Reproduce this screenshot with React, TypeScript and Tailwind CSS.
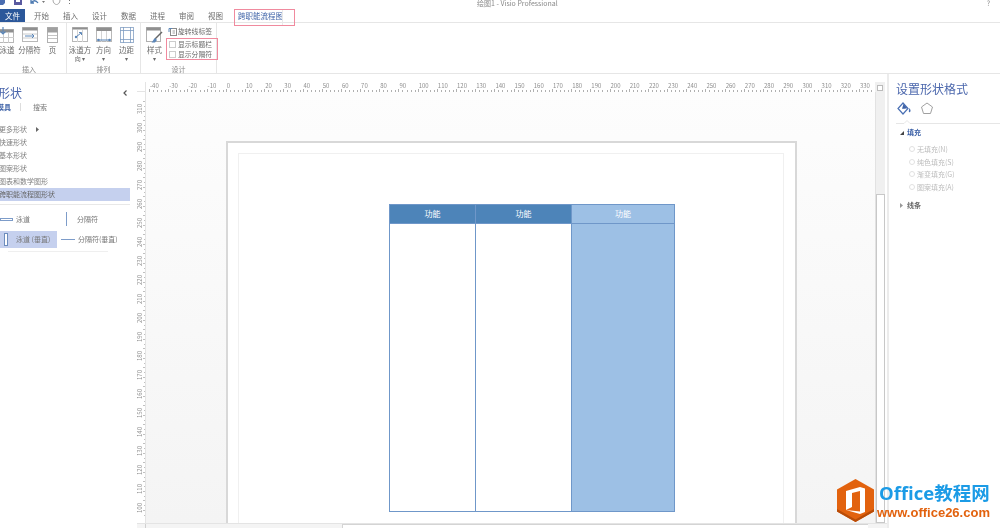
import React from "react";

const cjk = { fontFamily: '"Noto Sans CJK SC","Noto Sans",sans-serif' };

const B = "#5b86b8";

function LaneIcon() {
  return (
    <svg width="16" height="16" viewBox="0 0 16 16" className="-ml-[2px]">
      <rect x="0.5" y="2.500" width="15" height="13" fill="#fff" stroke="#b8b8b8" />
      <rect x="0.5" y="2.500" width="15" height="3" fill="#8f8f8f" />
      <path d="M5.500 6V16M10.500 6V16M0 10.500H16" stroke="#cccccc" />
      <path d="M5 0V7M2.500 4.500L5 7l2.500-2.500" stroke={B} fill="none" strokeWidth="1.200" />
    </svg>
  );
}
function SepIcon() {
  return (
    <svg width="16" height="15" viewBox="0 0 16 15">
      <rect x="0.5" y="0.5" width="15" height="14" fill="#fff" stroke="#b8b8b8" />
      <rect x="0.5" y="0.5" width="15" height="3" fill="#8f8f8f" />
      <path d="M1 7H15M1 11H15" stroke="#cccccc" />
      <path d="M3 9H12M10 7l2 2-2 2" stroke={B} fill="none" />
    </svg>
  );
}
function PageIcon() {
  return (
    <svg width="11" height="16" viewBox="0 0 11 16">
      <rect x="0.5" y="0.5" width="10" height="15" fill="#fff" stroke="#b0b0b0" />
      <rect x="0.5" y="0.5" width="10" height="5" fill="#a0a0a0" />
      <path d="M1 8.500H10M1 11.500H10" stroke="#c4c4c4" />
    </svg>
  );
}
function DirIcon() {
  return (
    <svg width="16" height="15" viewBox="0 0 16 15">
      <rect x="0.5" y="0.5" width="15" height="14" fill="#fff" stroke="#b8b8b8" />
      <rect x="0.5" y="0.5" width="15" height="2" fill="#8f8f8f" />
      <path d="M5.500 3V15M10.500 3V15" stroke="#d4d4d4" />
      <path d="M4 10L9 6M7 5.500h2.500v2.500" stroke={B} fill="none" />
      <circle cx="4" cy="10" r="1.200" fill={B} />
    </svg>
  );
}
function ToIcon() {
  return (
    <svg width="16" height="15" viewBox="0 0 16 15">
      <rect x="0.5" y="0.5" width="15" height="14" fill="#fff" stroke="#b8b8b8" />
      <rect x="0.5" y="0.5" width="15" height="3.500" fill="#8f8f8f" />
      <path d="M5.500 4V15M10.500 4V15" stroke="#d4d4d4" />
      <path d="M1 13H15" stroke={B} />
      <circle cx="2.500" cy="13" r="1.200" fill={B} />
      <circle cx="13.500" cy="13" r="1.200" fill={B} />
    </svg>
  );
}
function MarginIcon() {
  return (
    <svg width="14" height="16" viewBox="0 0 14 16">
      <rect x="0.5" y="0.5" width="13" height="15" fill="#fff" stroke="#9db3cf" />
      <path d="M3.500 0V16M10.500 0V16M0 3.500H14M0 12.500H14" stroke="#7e9cc2" strokeWidth="0.8" />
    </svg>
  );
}
function StyleIcon() {
  return (
    <svg width="17" height="16" viewBox="0 0 17 16">
      <rect x="0.5" y="0.5" width="14" height="14" fill="#fff" stroke="#b0b0b0" />
      <rect x="0.5" y="0.5" width="14" height="3" fill="#8f8f8f" />
      <path d="M16 5L9 12" stroke="#666" strokeWidth="1.500" />
      <path d="M9 11l2 2-2 2.500H5.500c1.500-1 1.500-3 3.500-4.500z" fill={B} />
    </svg>
  );
}
function RotateIcon() {
  return (
    <svg width="9" height="9" viewBox="0 0 9 9">
      <rect x="2.500" y="1.500" width="6" height="7" fill="#fff" stroke="#8a8a8a" />
      <path d="M1 5V1.500H4" stroke={B} fill="none" />
      <path d="M4.500 4H7M4.500 6H7" stroke="#a0a0a0" />
    </svg>
  );
}

function RibbonBtn({ icon, label, sub, w }: { icon: React.ReactNode; label: string; sub?: string; w: string }) {
  return (
    <div className={`flex flex-col items-center ${w}`}>
      <div className="h-[18px] flex items-start">{icon}</div>
      <div className="text-[7.500px] leading-[9px] text-[#6a6a6a] whitespace-nowrap">{label}</div>
      {sub && <div className="text-[6px] leading-[9px] text-[#6a6a6a] whitespace-nowrap">{sub}</div>}
    </div>
  );
}

function Group({ label, w, children, pl, labelCls = "" }: { label: string; w: string; pl: string; labelCls?: string; children: React.ReactNode }) {
  return (
    <div className={`${w} h-full border-r border-[#e6e6e6] flex flex-col shrink-0`}>
      <div className={`h-[41px] flex pt-[4px] ${pl}`}>{children}</div>
      <div className={`h-[9px] text-center text-[7px] leading-[11px] text-[#888] ${labelCls}`}>{label}</div>
    </div>
  );
}

function HRuler() {
  const items: number[] = [];
  for (let v = -40; v <= 330; v += 10) items.push(v);
  return (
    <div className="flex-1 h-full overflow-hidden flex pl-[3px]">
      {items.map((v) => (
        <div key={v} className="w-[19.2px] shrink-0 h-full flex flex-col">
          <div className="text-[6px] leading-[7px] h-[7px] pl-[1px] text-[#8f8f8f] whitespace-nowrap">{v}</div>
          <div className="flex-1 flex items-end justify-between pr-[2px] border-b border-[#e0e0e0]">
            {[3, 2, 2, 2, 2].map((h, i) => (
              <span key={i} className="w-px bg-[#b0b0b0]" style={{ height: h }} />
            ))}
          </div>
        </div>
      ))}
    </div>
  );
}

function VRuler() {
  const items: number[] = [];
  for (let v = 310; v >= 100; v -= 10) items.push(v);
  return (
    <div className="w-[9px] h-full overflow-hidden flex flex-col pt-[7px] border-r border-[#e4e4e4] shrink-0">
      {items.map((v) => (
        <div key={v} className="h-[19px] shrink-0 flex items-center">
          <span className="text-[6px] leading-[6px] text-[#8f8f8f] [writing-mode:vertical-rl] rotate-180">{v}</span>
          <span className="flex-1 flex flex-col justify-between h-[16px] items-end">
            {[2, 1.500, 2, 1.500].map((w, i) => (
              <span key={i} className="h-px bg-[#c0c0c0]" style={{ width: w }} />
            ))}
          </span>
        </div>
      ))}
    </div>
  );
}

function Lane({ w, filled, last }: { w: string; filled?: boolean; last?: boolean }) {
  return (
    <div className={`${w} flex flex-col ${last ? "" : "border-r"} border-[#6f97c9]`}>
      <div
        className={`h-[19px] flex items-center justify-center text-[8px] text-white border-b border-[#6f97c9] ${
          filled ? "bg-[#9dc0e5]" : "bg-[#4d84b9]"
        }`}
      >
        功能
      </div>
      <div className={`flex-1 ${filled ? "bg-[#9dc0e5]" : "bg-white"}`} />
    </div>
  );
}

function Radio({ label }: { label: string }) {
  return (
    <div className="flex items-center h-[12.500px] pl-[13px] gap-[2px]">
      <span className="w-[6px] h-[6px] rounded-full border border-[#e0e0e0]" />
      <span className="text-[7px] text-[#bcbcbc] whitespace-nowrap">{label}</span>
    </div>
  );
}

export default function App() {
  return (
    <div className="relative w-[1000px] h-[528px] overflow-hidden bg-white" style={cjk}>
      <div className="w-full h-full flex flex-col blur-[0.45px]">
        {/* title */}
        <div className="h-[9px] flex relative shrink-0">
          <svg width="76" height="9" viewBox="0 0 76 9" className="shrink-0">
            <path d="M0 0H5V3L3 5H0z" fill="#4a6db0" />
            <path d="M14 0H22V5H14z" fill="#5a5aa0" />
            <rect x="16" y="0" width="4" height="2" fill="#fff" />
            <path d="M31 3c2-3 5-3 7 0M31 0v3h3" stroke="#4a78b0" fill="none" strokeWidth="1.300" />
            <path d="M42 1h3l-1.500 2z" fill="#777" />
            <path d="M53 0c0 3 2 4.500 3.500 4.500S60 3 60 0" fill="none" stroke="#a8a8a8" />
            <path d="M69 0h1v1h-1zM69 3h1v1h-1z" fill="#777" />
          </svg>
          <div className="w-[924px] pl-[401px] pr-[10px] flex justify-between text-[#888]">
            <span className="text-[7px] leading-[6px] whitespace-nowrap">绘图1 - Visio Professional</span>
            <span className="text-[7px] leading-[7px]">?</span>
          </div>
        </div>

        {/* tabs */}
        <div className="h-[14px] flex shrink-0 text-[7.500px] text-[#6e6e6e] border-b border-[#e6e6e6]">
          <div className="w-[25px] bg-[#2b579a] text-white flex items-center justify-center">文件</div>
          {["开始", "插入", "设计", "数据", "进程", "审阅", "视图"].map((t, i) => (
            <div key={t} className={`w-[29px] flex items-center justify-center ${i === 0 ? "ml-[2px]" : ""}`}>
              {t}
            </div>
          ))}
          <div className="relative ml-[4px] w-[61px] h-[17px] border border-[#f08a9e] z-10 flex items-center pl-[3px] pb-[3px] text-[#3f63a8] whitespace-nowrap">
            跨职能流程图
            <span className="absolute right-[11px] top-0 bottom-0 w-px bg-[#e8e8e8]" />
          </div>
        </div>

        {/* ribbon */}
        <div className="h-[51px] flex shrink-0 border-b border-[#e6e6e6]">
          <Group label="插入" w="w-[67px]" pl="pl-0" labelCls="pr-[8px]">
            <RibbonBtn w="w-[16px] -ml-[1px]" icon={<LaneIcon />} label="泳道" />
            <RibbonBtn w="w-[27px] ml-[1px]" icon={<SepIcon />} label="分隔符" />
            <RibbonBtn w="w-[19px]" icon={<PageIcon />} label="页" />
          </Group>
          <Group label="排列" w="w-[74px]" pl="pl-[1px]">
            <RibbonBtn w="w-[24px]" icon={<DirIcon />} label="泳道方" sub="向 ▾" />
            <RibbonBtn w="w-[23px]" icon={<ToIcon />} label="方向" sub="▾" />
            <RibbonBtn w="w-[23px]" icon={<MarginIcon />} label="边距" sub="▾" />
          </Group>
          <Group label="设计" w="w-[76px]" pl="pl-[5px]">
            <RibbonBtn w="w-[18px]" icon={<StyleIcon />} label="样式" sub="▾" />
            <div className="ml-[3px] flex flex-col text-[7px] text-[#6a6a6a]">
              <div className="h-[9px] flex items-center gap-[1px] whitespace-nowrap pl-[2px] text-[6.800px]">
                <RotateIcon />
                旋转线标签
              </div>
              <div className="border border-[#f08a9e] w-[52px] h-[22px] pl-[2px] flex flex-col justify-around mt-[2px]">
                {["显示标题栏", "显示分隔符"].map((t) => (
                  <div key={t} className="flex items-center gap-[2px] whitespace-nowrap text-[6.800px]">
                    <span className="w-[7px] h-[7px] border border-[#cccccc] bg-white" />
                    {t}
                  </div>
                ))}
              </div>
            </div>
          </Group>
        </div>

        {/* body */}
        <div className="flex-1 flex min-h-0">
          {/* left panel */}
          <div className="w-[137px] shrink-0 overflow-hidden">
            <div className="flex items-center justify-between pr-[10px] pt-[11px] h-[27px]">
              <span className="text-[12px] leading-[16px] text-[#4a66ac] -ml-[2px]">形状</span>
              <svg width="4" height="6" viewBox="0 0 4 6"><path d="M3.500 0.500L1 3l2.500 2.500" stroke="#555" fill="none" strokeWidth="1.200" /></svg>
            </div>
            <div className="flex items-center h-[12px] text-[7px] -ml-[3px]">
              <span className="text-[#3f63a8] font-bold">模具</span>
              <span className="w-px h-[8px] bg-[#dddddd] mx-[9px]" />
              <span className="text-[#777] ml-[3px]">搜索</span>
            </div>
            <div className="mt-[10px] text-[7px] text-[#808080] w-[130px]">
              <div className="h-[13px] flex items-center -ml-[1px] gap-[9px] whitespace-nowrap">
                更多形状
                <svg width="3" height="5" viewBox="0 0 3 5"><path d="M0 0L3 2.500L0 5z" fill="#666" /></svg>
              </div>
              {["快速形状", "基本形状", "图案形状", "图表和数学图形"].map((t) => (
                <div key={t} className="h-[13px] flex items-center -indent-[1px] whitespace-nowrap">
                  {t}
                </div>
              ))}
              <div className="h-[13px] bg-[#c5d0ee] text-[#666] flex items-center -indent-[1px] whitespace-nowrap">
                跨职能流程图形状
              </div>
            </div>
            <div className="w-[130px] h-px bg-[#e8e8e8] mt-[3px]" />
            <div className="mt-[5px] text-[7px] text-[#777]">
              <div className="flex items-center h-[18px]">
                <div className="w-[57px] flex items-center gap-[3px] whitespace-nowrap">
                  <span className="w-[13px] h-[3px] border border-[#7d9cc9] bg-white" />
                  泳道
                </div>
                <div className="flex items-center gap-[10px] ml-[9px] whitespace-nowrap">
                  <span className="w-px h-[14px] bg-[#7d9cc9]" />
                  分隔符
                </div>
              </div>
              <div className="flex items-center h-[17px] mt-[3px]">
                <div className="w-[57px] h-full bg-[#c5d0ee] flex items-center whitespace-nowrap pl-[4px] gap-[8px]">
                  <span className="w-[4px] h-[13px] border border-[#6d8dbd] bg-white" />
                  泳道 (垂直)
                </div>
                <div className="flex items-center gap-[3px] ml-[4px] whitespace-nowrap">
                  <span className="w-[14px] h-px bg-[#7d9cc9]" />
                  分隔符(垂直)
                </div>
              </div>
            </div>
            <div className="w-[100px] h-px bg-[#efefef] ml-[8px] mt-[3px]" />
          </div>

          {/* center */}
          <div className="flex-1 flex flex-col min-w-0">
            <div className="h-[8px] shrink-0" />
            <div className="h-[10px] flex shrink-0">
              <div className="w-[9px] shrink-0 border-r border-b border-[#e4e4e4]" />
              <HRuler />
              <div className="w-[10px] shrink-0 bg-[#f0f0f0] flex items-start justify-center pt-[3px] mr-[2px]">
                <span className="w-[6px] h-[6px] bg-white border border-[#bbbbbb]" />
              </div>
            </div>
            <div className="flex-1 flex min-h-0">
              <VRuler />
              <div className="flex-1 min-w-0 overflow-hidden pl-[80px] pt-[49px] bg-gradient-to-b from-[#fdfdfd] to-[#f4f4f4]">
                <div className="w-[571px] h-[500px] bg-white border-2 border-[#d8d8d8] pl-[10px] pt-[10px]">
                  <div className="w-[546px] h-full border-l border-t border-r border-[#f0f0f0] pl-[150px] pt-[50px]">
                    <div className="w-[286px] h-[308px] flex border border-[#6f97c9]">
                      <Lane w="w-[86px]" />
                      <Lane w="w-[96px]" />
                      <Lane w="flex-1" filled last />
                    </div>
                  </div>
                </div>
              </div>
              <div className="w-[10px] shrink-0 mr-[2px] bg-[#f0f0f0] border-l border-[#e2e2e2] flex flex-col pt-[102px]">
                <div className="flex-1 bg-white border border-[#c8c8c8]" />
              </div>
            </div>
            <div className="h-[5px] flex shrink-0 bg-[#f4f4f4] border-t border-[#e4e4e4]">
              <div className="w-[9px] border-r border-[#d0d0d0]" />
              <div className="w-[196px]" />
              <div className="w-[526px] bg-white border-l border-t border-[#d4d4d4]" />
            </div>
          </div>

          {/* right panel */}
          <div className="w-[113px] shrink-0 border-l-2 border-[#ececec] pl-[7px]">
            <div className="pt-[7px] h-[25px] text-[12px] leading-[16px] text-[#4a66ac] whitespace-nowrap">设置形状格式</div>
            <div className="flex items-center h-[16px] gap-[10px] pl-[1px] mt-[1px]">
              <svg width="14" height="13" viewBox="0 0 14 13">
                <path d="M6 1L1 6.500L6 12L11 6.500z" fill="#fff" stroke="#4a70b4" strokeWidth="1.200" />
                <path d="M6.500 2L10.500 6.200L7.500 6.800H5z" fill="#3f63a8" />
                <path d="M12.500 6c1 1.800 1.500 3 .5 4s-1.800-.5-.5-4z" fill="#4a70b4" />
              </svg>
              <svg width="12" height="13" viewBox="0 0 12 13">
                <path d="M6 1L11.500 5L9.500 11.500H2.500L0.500 5z" fill="#fff" stroke="#a0a0a0" />
              </svg>
            </div>
            <svg width="104" height="4" viewBox="0 0 104 4" className="block mt-[4px]">
              <path d="M0 3.500H8L11 0.500L14 3.500H104" stroke="#e6e6e6" fill="none" />
            </svg>
            <div className="mt-[4px] h-[9px] flex items-center gap-[3px] text-[7px] font-bold text-[#3f63a8] pl-[4px]">
              <svg width="4" height="4" viewBox="0 0 4 4"><path d="M4 0V4H0z" fill="#444" /></svg>
              填充
            </div>
            <div className="mt-[6px]">
              <Radio label="无填充(N)" />
              <Radio label="纯色填充(S)" />
              <Radio label="渐变填充(G)" />
              <Radio label="图案填充(A)" />
            </div>
            <div className="mt-[7px] h-[10px] flex items-center gap-[4px] text-[7px] font-bold text-[#666] pl-[4px]">
              <svg width="3" height="5" viewBox="0 0 3 5"><path d="M0 0L3 2.500L0 5z" fill="#999" /></svg>
              线条
            </div>
          </div>
        </div>
      </div>

      {/* watermark */}
      <div className="absolute left-[837px] top-[479px] flex items-start gap-[5px]">
        <svg width="37" height="43" viewBox="0 0 37 43">
          <path d="M18.500 0L37 10.500V32.500L18.500 43L0 32.500V10.500z" fill="#e2620e" />
          <path d="M37 30V32.500L18.500 43L0 32.500V30L18.500 40.500z" fill="#b84c08" />
          <path d="M9 12L23 8L28 9.500V33L23 35L9 31L23 32.500V12L15 14V28L9 31z" fill="#fff" />
        </svg>
        <div className="flex flex-col w-[120px]">
          <div
            className="text-[18.500px] leading-[24px] font-bold text-[#1b9be6] whitespace-nowrap mt-[2px]"
            style={{ fontFamily: '"Open Sans","Noto Sans CJK SC",sans-serif' }}
          >
            Office教程网
          </div>
          <div
            className="text-[13px] leading-[14px] font-bold text-[#e2620e] whitespace-nowrap -ml-[2px] mt-[1px]"
            style={{ fontFamily: '"Liberation Sans",sans-serif' }}
          >
            www.office26.com
          </div>
        </div>
      </div>
    </div>
  );
}
